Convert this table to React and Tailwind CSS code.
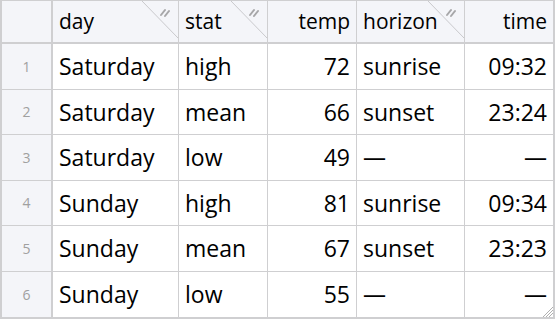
import React from "react";

const columns = [
  { key: "day", label: "day", align: "left", grip: true },
  { key: "stat", label: "stat", align: "left", grip: true },
  { key: "temp", label: "temp", align: "right", grip: false },
  { key: "horizon", label: "horizon", align: "left", grip: true },
  { key: "time", label: "time", align: "right", grip: false },
];

const rows = [
  ["Saturday", "high", "72", "sunrise", "09:32"],
  ["Saturday", "mean", "66", "sunset", "23:24"],
  ["Saturday", "low", "49", "—", "—"],
  ["Sunday", "high", "81", "sunrise", "09:34"],
  ["Sunday", "mean", "67", "sunset", "23:23"],
  ["Sunday", "low", "55", "—", "—"],
];

// coin de redimensionnement de colonne (diagonale + poignée)
function Grip() {
  return (
    <svg className="absolute right-0 top-0" width="36" height="38" viewBox="0 0 36 38">
      <line x1="0" y1="0" x2="36" y2="37" stroke="#c9c9cc" strokeWidth="1" />
      <line x1="19" y1="14" x2="23" y2="9" stroke="#a6a6a8" strokeWidth="2" strokeLinecap="round" />
      <line x1="23" y1="15" x2="27" y2="10" stroke="#a6a6a8" strokeWidth="2" strokeLinecap="round" />
    </svg>
  );
}

export default function App() {
  return (
    <div
      className="w-[555px] h-[319px] bg-white overflow-hidden"
      style={{ fontFamily: '"Open Sans", "Noto Sans", sans-serif' }}
    >
      <div className="relative w-[555px] h-[319px] border-t border-l-2 border-r-2 border-b-2 border-[#cfcfd1] grid grid-cols-[51px_126px_89px_89px_108px_1fr] grid-rows-[43px_repeat(6,1fr)]">
        <div className="bg-[#f4f5f9] border-r-2 border-b-2 border-[#cfcfd1]" />
        {columns.map((c, i) => (
          <div
            key={c.key}
            className={`relative bg-[#f4f5f9] border-b-2 border-[#cfcfd1] flex items-center px-[6px] text-[21px] text-black ${
              i < columns.length - 1 ? "border-r" : ""
            } ${c.align === "right" ? "justify-end" : "justify-start"}`}
          >
            {c.label}
            {c.grip && <Grip />}
          </div>
        ))}
        {rows.map((r, ri) => (
          <React.Fragment key={ri}>
            <div
              className={`bg-[#f4f5f9] border-r-2 border-[#cfcfd1] flex items-center justify-center text-[14px] text-[#a0a0a0] ${
                ri < rows.length - 1 ? "border-b" : ""
              }`}
            >
              {ri + 1}
            </div>
            {r.map((v, ci) => (
              <div
                key={ci}
                className={`border-[#cfcfd1] flex items-center px-[6px] text-[23px] text-black ${
                  ri < rows.length - 1 ? "border-b" : ""
                } ${ci < r.length - 1 ? "border-r" : ""} ${
                  columns[ci].align === "right" ? "justify-end" : "justify-start"
                }`}
              >
                {v}
              </div>
            ))}
          </React.Fragment>
        ))}
        {/* poignée de redimensionnement en bas à droite */}
        <svg className="absolute right-0 bottom-0" width="12" height="12" viewBox="0 0 12 12">
          <line x1="12" y1="2" x2="2" y2="12" stroke="#b0b0b0" strokeWidth="1" />
          <line x1="12" y1="5" x2="5" y2="12" stroke="#b0b0b0" strokeWidth="1" />
          <line x1="12" y1="8" x2="8" y2="12" stroke="#b0b0b0" strokeWidth="1" />
        </svg>
      </div>
    </div>
  );
}
